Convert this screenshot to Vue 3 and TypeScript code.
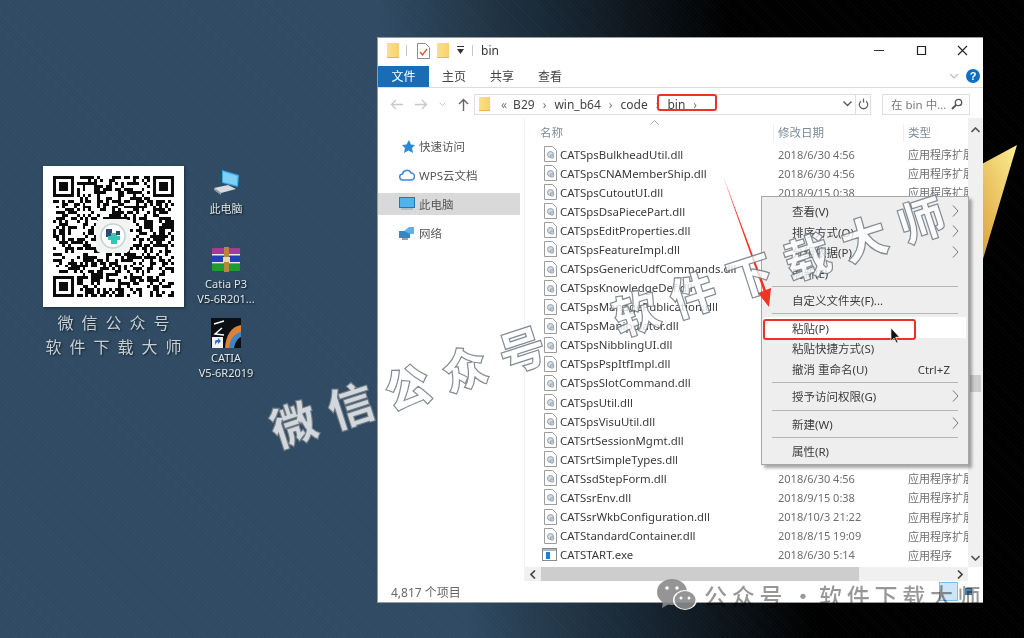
<script setup lang="ts">
interface FileRow {
  name: string
  date: string
  exe?: boolean
}

const names = [
  'CATSpsBulkheadUtil.dll', 'CATSpsCNAMemberShip.dll', 'CATSpsCutoutUI.dll', 'CATSpsDsaPiecePart.dll',
  'CATSpsEditProperties.dll', 'CATSpsFeatureImpl.dll', 'CATSpsGenericUdfCommands.dll', 'CATSpsKnowledgeDef.dll',
  'CATSpsManagePublication.dll', 'CATSpsManipulator.dll', 'CATSpsNibblingUI.dll', 'CATSpsPspItfImpl.dll',
  'CATSpsSlotCommand.dll', 'CATSpsUtil.dll', 'CATSpsVisuUtil.dll', 'CATSrtSessionMgmt.dll',
  'CATSrtSimpleTypes.dll', 'CATSsdStepForm.dll', 'CATSsrEnv.dll', 'CATSsrWkbConfiguration.dll',
  'CATStandardContainer.dll', 'CATSTART.exe',
]
const dates: Record<number, string> = {
  2: '2018/9/15 0:38', 18: '2018/9/15 0:38', 19: '2018/10/3 21:22', 20: '2018/8/15 19:09', 21: '2018/6/30 5:14',
}
const rows: FileRow[] = names.map((name, i) => ({
  name,
  date: dates[i] ?? '2018/6/30 4:56',
  exe: name.endsWith('.exe'),
}))

const menu = [
  { label: '查看(V)', arrow: true },
  { label: '排序方式(O)', arrow: true },
  { label: '分组依据(P)', arrow: true },
  { label: '刷新(E)' },
  { sep: true },
  { label: '自定义文件夹(F)...' },
  { sep: true },
  { label: '粘贴(P)', hot: true },
  { label: '粘贴快捷方式(S)' },
  { label: '撤消 重命名(U)', key: 'Ctrl+Z' },
  { sep: true },
  { label: '授予访问权限(G)', arrow: true },
  { sep: true },
  { label: '新建(W)', arrow: true },
  { sep: true },
  { label: '属性(R)' },
]

// fake qr matrix, seeded so that the picture stays the same
const size = 41
function finder(x: number, y: number) {
  return `M${x} ${y}h7v7h-7zM${x + 1} ${y + 1}v5h5v-5zM${x + 2} ${y + 2}h3v3h-3z`
}
function qrPath() {
  let seed = 20190
  let d = ''
  for (let y = 0; y < size; y++) {
    for (let x = 0; x < size; x++) {
      seed = (seed * 1103515245 + 12345) & 0x7fffffff
      const corner = (x < 8 && y < 8) || (x > 32 && y < 8) || (x < 8 && y > 32)
      if (!corner && (seed >> 16) % 100 < 50) d += `M${x} ${y}h1v1h-1z`
    }
  }
  return d + finder(0, 0) + finder(34, 0) + finder(0, 34)
}
const qr = qrPath()
</script>

<template>
  <div class="desktop">
    <svg class="shard" width="40" height="130" viewBox="0 0 40 130">
      <defs>
        <linearGradient id="gold" x1="0.8" y1="0" x2="0.1" y2="1">
          <stop offset="0" stop-color="#f8e98a" />
          <stop offset="1" stop-color="#dd9c38" />
        </linearGradient>
      </defs>
      <polygon points="37,0 0,20 0,124" fill="url(#gold)" />
    </svg>

    <div class="qr-card">
      <svg class="qr" viewBox="0 0 41 41" shape-rendering="crispEdges">
        <path :d="qr" fill="#0b0b0b" fill-rule="evenodd" />
      </svg>
      <svg class="qr-logo" viewBox="0 0 34 34">
        <rect width="34" height="34" rx="5" fill="#f2f4f4" />
        <circle cx="17" cy="17" r="12" fill="#fff" stroke="#c4d2d4" stroke-width="1.6" />
        <rect x="10" y="10" width="6" height="8" fill="#2c4a72" />
        <rect x="15" y="14" width="6" height="11" fill="#36c4b4" />
        <rect x="12" y="17" width="12" height="4" fill="#36c4b4" />
        <rect x="20" y="12" width="4" height="4" fill="#2c4a72" />
      </svg>
    </div>
    <div class="qr-caption">
      <div>微信公众号</div>
      <div>软件下载大师</div>
    </div>

    <div class="icons">
      <div class="shortcut pc">
        <svg width="32" height="28" viewBox="0 0 32 28">
          <polygon points="12,2 29,7 28,19 12,15" fill="#35a8ea" />
          <polygon points="13,3.5 27.5,8 27,17.5 13,14" fill="#7fd0f6" />
          <polygon points="4,20 18,17 26,21 11,25" fill="#d6dcdf" />
          <polygon points="4,20 11,25 11,27 4,22" fill="#98a3aa" />
        </svg>
        <span>此电脑</span>
      </div>
      <div class="shortcut rar">
        <svg width="30" height="26" viewBox="0 0 30 26">
          <rect x="1" y="1" width="28" height="7" rx="1" fill="#a63c92" />
          <rect x="1" y="9" width="28" height="7" rx="1" fill="#2440b8" />
          <rect x="1" y="17" width="28" height="7" rx="1" fill="#1f9b2f" />
          <rect x="1" y="7" width="28" height="1.5" fill="#e8e8e8" />
          <rect x="1" y="15" width="28" height="1.5" fill="#e8e8e8" />
          <rect x="13" y="0" width="5" height="25" fill="#b8853a" />
          <rect x="12" y="10" width="7" height="5" fill="#e8d9a8" />
        </svg>
        <span>Catia P3<br />V5-6R201...</span>
      </div>
      <div class="shortcut catia">
        <svg width="30" height="30" viewBox="0 0 30 30">
          <rect width="30" height="30" fill="#0c0f14" />
          <path d="M14 30C15 17 20 9 30 7v8c-6 2-8 8-9 15z" fill="#d9823a" />
          <path d="M18 30c1-9 5-14 12-16v5c-4 2-6 6-7 11z" fill="#3a86c8" />
          <path d="M3 6l10-3M11 10L4 16l9 1M4 21l8 1" stroke="#fff" stroke-width="1.4" fill="none" />
          <rect x="1" y="19" width="11" height="11" fill="#f2f2f2" />
          <path d="M4 27v-3c0-2 1-2 3-2v-2l3 3-3 3v-2c-1 0-2 1-3 3z" fill="#2a72c8" />
        </svg>
        <span>CATIA<br />V5-6R2019</span>
      </div>
    </div>

    <section class="window">
      <header class="titlebar">
        <i class="folder"></i>
        <b class="vline"></b>
        <svg class="note" width="13" height="16" viewBox="0 0 13 16">
          <path d="M.5.5h8l4 4v11H.5z" fill="#fff" stroke="#8d8d8d" />
          <path d="M3 9l2.500 3L10 6" fill="none" stroke="#d0562a" stroke-width="1.300" />
        </svg>
        <i class="folder"></i>
        <svg width="8" height="9" viewBox="0 0 8 9"><path d="M0 0h7v1H0zM0 3h7L3.500 8z" fill="#333" /></svg>
        <b class="vline"></b>
        <span class="title">bin</span>
        <div class="controls">
          <svg width="11" height="11" viewBox="0 0 11 11"><path d="M0 5.500h10" stroke="#333" /></svg>
          <svg width="11" height="11" viewBox="0 0 11 11"><path d="M1.500 1.500h8v8h-8z" fill="none" stroke="#222" stroke-width="1.200" /></svg>
          <svg width="11" height="11" viewBox="0 0 11 11"><path d="M1 1l9 9M10 1l-9 9" stroke="#222" stroke-width="1.100" /></svg>
        </div>
      </header>

      <nav class="tabs">
        <span class="tab file">文件</span>
        <span class="tab home">主页</span>
        <span class="tab share">共享</span>
        <span class="tab view">查看</span>
        <svg class="collapse" width="10" height="6" viewBox="0 0 10 6"><path d="M1 1l4 4 4-4" fill="none" stroke="#bbb" stroke-width="1.100" /></svg>
        <span class="help">?</span>
      </nav>

      <div class="addressbar">
        <div class="nav">
          <svg width="13" height="11" viewBox="0 0 13 11"><path d="M13 5.500H2M6 1L1.500 5.500 6 10" fill="none" stroke="#c8c8c8" stroke-width="1.300" /></svg>
          <svg width="13" height="11" viewBox="0 0 13 11"><path d="M0 5.500h11M7 1l4.500 4.500L7 10" fill="none" stroke="#c8c8c8" stroke-width="1.300" /></svg>
          <svg width="7" height="5" viewBox="0 0 7 5"><path d="M.5.500l3 3 3-3" fill="none" stroke="#c8c8c8" /></svg>
          <svg width="11" height="13" viewBox="0 0 11 13"><path d="M5.500 13V2M1 6l4.500-4.500L10 6" fill="none" stroke="#666" stroke-width="1.400" /></svg>
        </div>
        <div class="address">
          <i class="folder small"></i>
          <span class="crumb sep first">«</span>
          <span class="crumb b29">B29</span>
          <span class="crumb sep">›</span>
          <span class="crumb">win_b64</span>
          <span class="crumb sep">›</span>
          <span class="crumb">code</span>
          <span class="crumb sep">›</span>
          <span class="crumb">bin</span>
          <span class="crumb sep">›</span>
          <svg class="drop" width="9" height="6" viewBox="0 0 9 6"><path d="M.5.500l4 4 4-4" fill="none" stroke="#555" stroke-width="1.300" /></svg>
        </div>
        <div class="refresh">
          <svg width="11" height="12" viewBox="0 0 11 12"><path d="M3 3.200a4.200 4.200 0 1 0 5 0M5.500 .5v4" fill="none" stroke="#666" stroke-width="1.300" /></svg>
        </div>
        <div class="search">
          <span>在 bin 中...</span>
          <svg width="12" height="12" viewBox="0 0 12 12"><circle cx="7.500" cy="4.500" r="3.200" fill="none" stroke="#555" stroke-width="1.300" /><path d="M5 7l-4 4" stroke="#555" stroke-width="1.800" /></svg>
        </div>
      </div>

      <div class="main">
        <aside class="sidebar">
          <div class="side-item">
            <svg class="side-icon" width="13" height="13" viewBox="0 0 13 13"><polygon points="7,0 9,4.500 13,5 10,8 11,13 6.500,10.500 2,13 3,8 0,5 4.500,4.500" fill="#2b8ad8" /></svg>
            <span>快速访问</span>
          </div>
          <div class="side-item">
            <svg class="side-icon wide" width="16" height="12" viewBox="0 0 16 12"><path d="M4 11a3 3 0 0 1-.5-6A4.500 4.500 0 0 1 12 4a3.500 3.500 0 0 1 0 7z" fill="#fff" stroke="#3f86d6" stroke-width="1.500" /></svg>
            <span>WPS云文档</span>
          </div>
          <div class="side-item active">
            <svg class="side-icon wide" width="16" height="14" viewBox="0 0 16 14"><rect x=".5" y=".5" width="15" height="10" fill="#4fb4ee" stroke="#2277b8" /><rect x="2" y="11" width="12" height="2" fill="#b5bcc2" /></svg>
            <span>此电脑</span>
          </div>
          <div class="side-item">
            <svg class="side-icon wide" width="16" height="14" viewBox="0 0 16 14"><rect x="0" y="5" width="11" height="7" fill="#2f86c8" /><path d="M5 5l5-4h5v7h-4z" fill="#5cb2e4" /><rect x="3" y="12" width="6" height="2" fill="#9aa4ac" /></svg>
            <span>网络</span>
          </div>
        </aside>

        <div class="list">
          <div class="list-view">
            <div class="columns">
              <svg class="sort" width="9" height="5" viewBox="0 0 9 5"><path d="M.5 4.500l4-4 4 4" fill="none" stroke="#aaa" /></svg>
              <span class="col name">名称</span>
              <span class="col date">修改日期</span>
              <span class="col type">类型</span>
            </div>
            <div class="rows">
              <div v-for="row in rows" :key="row.name" class="row">
                <span class="cell name">
                  <svg v-if="!row.exe" width="13" height="16" viewBox="0 0 13 16">
                    <path d="M.5.500h8l4 4v11H.5z" fill="#fff" stroke="#9c9c9c" />
                    <circle cx="6.500" cy="8.500" r="3" fill="#d3dde4" stroke="#8ea0ac" />
                    <circle cx="8" cy="10.500" r="1.800" fill="#c6ced4" stroke="#8a949c" stroke-width=".7" />
                  </svg>
                  <svg v-else class="exe" width="15" height="13" viewBox="0 0 15 13">
                    <rect x=".5" y=".5" width="14" height="12" fill="#fff" stroke="#8a8a8a" />
                    <rect x="1" y="1" width="13" height="2" fill="#a8b8c4" />
                    <rect x="4" y="4" width="4" height="7" fill="#1f7fd8" />
                  </svg>
                  {{ row.name }}
                </span>
                <span class="cell date">{{ row.date }}</span>
                <span class="cell type">{{ row.exe ? '应用程序' : '应用程序扩展' }}</span>
              </div>
            </div>
          </div>
          <div class="vscroll">
            <svg width="9" height="6" viewBox="0 0 9 6"><path d="M.5 5l4-4 4 4" fill="none" stroke="#555" stroke-width="1.600" /></svg>
            <i class="thumb"></i>
            <svg width="9" height="6" viewBox="0 0 9 6"><path d="M.5 1l4 4 4-4" fill="none" stroke="#555" stroke-width="1.600" /></svg>
          </div>
          <div class="hscroll">
            <svg width="6" height="9" viewBox="0 0 6 9"><path d="M5 .5l-4 4 4 4" fill="none" stroke="#444" stroke-width="1.600" /></svg>
            <i class="thumb"></i>
            <svg width="6" height="9" viewBox="0 0 6 9"><path d="M1 .5l4 4-4 4" fill="none" stroke="#444" stroke-width="1.600" /></svg>
          </div>
        </div>
      </div>

      <footer class="status">
        <span>4,817 个项目</span>
        <div class="toggles">
          <i class="toggle on"></i>
          <i class="toggle"></i>
        </div>
      </footer>
    </section>

    <div class="context">
      <template v-for="(item, i) in menu" :key="i">
        <div v-if="item.sep" class="menu-sep"></div>
        <div v-else class="menu-item" :class="{ hot: item.hot }">
          <span>{{ item.label }}</span>
          <span v-if="item.key" class="menu-key">{{ item.key }}</span>
          <svg v-if="item.arrow" class="menu-arrow" width="7" height="12" viewBox="0 0 7 12"><path d="M1 .5l5 5.500-5 5.500" fill="none" stroke="#777" /></svg>
        </div>
      </template>
    </div>

    <div class="mark mark-address"></div>
    <div class="mark mark-paste"></div>

    <svg class="overlay" width="1024" height="638" viewBox="0 0 1024 638">
      <polygon points="723,176 763.500,291 758,293 769,307 771,288 766,290" fill="#ee3524" />
      <path d="M891 328v13l3-3 2.500 5 1.500-.8-2.500-5h4z" fill="#111" stroke="#fff" stroke-width=".6" />
    </svg>

    <div class="watermark">微信公众号　软件下载大师</div>

    <div class="brand">
      <svg width="40" height="32" viewBox="0 0 40 32">
        <ellipse cx="15" cy="13" rx="15" ry="13" fill="#8a8a8a" />
        <path d="M6 22l-1 7 7-4z" fill="#8a8a8a" />
        <ellipse cx="28" cy="21" rx="12" ry="10" fill="#fff" />
        <ellipse cx="28" cy="21" rx="10.500" ry="9" fill="#8a8a8a" />
        <circle cx="10" cy="9" r="1.800" fill="#fff" />
        <circle cx="20" cy="9" r="1.800" fill="#fff" />
        <circle cx="24" cy="19" r="1.500" fill="#fff" />
        <circle cx="32" cy="19" r="1.500" fill="#fff" />
      </svg>
      <span class="brand-text">公众号<em>·</em>软件下载大师</span>
    </div>
  </div>
</template>

<style>
html,
body {
  margin: 0;
  background: #000;
}
</style>

<style scoped>
.desktop {
  position: relative;
  width: 1024px;
  height: 638px;
  overflow: hidden;
  font-family: "Noto Sans", "Noto Sans CJK SC", sans-serif;
  background:
    repeating-linear-gradient(45deg, rgba(255, 255, 255, 0.018) 0 1px, transparent 1px 3px),
    linear-gradient(82deg, #2f4a62 0, #2f4a62 42%, #14212c 60%, #000 73%);
  filter: blur(0.45px);
}

.shard {
  position: absolute;
  left: 980px;
  top: 145px;
}

.qr-card {
  position: absolute;
  left: 43px;
  top: 166px;
  width: 141px;
  height: 141px;
  background: #fff;
  display: flex;
  align-items: center;
  justify-content: center;
  box-shadow: 1px 1px 3px rgba(0, 0, 0, 0.4);
}

.qr {
  width: 121px;
  height: 121px;
}

.qr-logo {
  position: absolute;
  left: 53px;
  top: 53px;
  width: 34px;
  height: 34px;
}

.qr-caption {
  position: absolute;
  left: 33px;
  top: 311px;
  width: 161px;
  text-align: center;
  white-space: nowrap;
  font-size: 16px;
  line-height: 24px;
  letter-spacing: 8px;
  text-indent: 8px;
  color: #c6d0d6;
  text-shadow: 1px 1px 2px rgba(0, 0, 0, 0.6);
}

.icons {
  position: absolute;
  left: 190px;
  top: 168px;
  width: 72px;
  display: flex;
  flex-direction: column;
  align-items: center;
  font-size: 11px;
  line-height: 15px;
  color: #dfe5e9;
  text-align: center;
  text-shadow: 1px 1px 2px rgba(0, 0, 0, 0.8);
}

.shortcut {
  display: flex;
  flex-direction: column;
  align-items: center;
  white-space: nowrap;
}

.shortcut svg {
  margin-bottom: 3px;
}

.pc svg {
  margin-bottom: 5px;
}

.catia svg {
  margin-bottom: 2px;
}

.pc {
  height: 79px;
}

.rar {
  height: 71px;
}

.window {
  position: absolute;
  left: 377px;
  top: 37px;
  width: 606px;
  height: 566px;
  box-sizing: border-box;
  border: 1px solid #9a9a9a;
  border-right: 0;
  background: #fff;
  display: flex;
  flex-direction: column;
  font-size: 11.5px;
  color: #444;
}

.titlebar {
  height: 26px;
  display: flex;
  align-items: center;
  padding-left: 9px;
  padding-bottom: 1px;
  box-sizing: border-box;
  gap: 7px;
}

.folder {
  display: block;
  width: 12px;
  height: 15px;
  background: linear-gradient(90deg, #fbe08c, #f7d26a);
  border-bottom: 1px solid #e3b94e;
  box-sizing: border-box;
}

.folder.small {
  margin-left: 4px;
  width: 11px;
  height: 14px;
}

.vline {
  width: 1px;
  height: 11px;
  background: #c8c8c8;
}

.note {
  margin-left: 3px;
}

.titlebar .folder + svg {
  margin-left: 1px;
}

.title {
  font-size: 12px;
  color: #333;
  margin-left: 1px;
}

.controls {
  margin-left: auto;
  width: 94px;
  display: flex;
  justify-content: space-between;
  padding-right: 15px;
}

.tabs {
  position: relative;
  height: 23px;
  display: flex;
  align-items: center;
  border-bottom: 1px solid #dcdcdc;
}

.tab {
  font-size: 12px;
  color: #444;
}

.file {
  width: 51px;
  height: 21px;
  margin-top: 1px;
  background: #1a6db5;
  color: #fff;
  text-align: center;
  line-height: 21px;
}

.home {
  margin-left: 13px;
}

.share {
  margin-left: 24px;
}

.view {
  margin-left: 24px;
}

.collapse {
  margin-left: auto;
}

.help {
  width: 14px;
  height: 14px;
  margin: 0 3px 0 7px;
  border-radius: 50%;
  background: #0d6fc4;
  color: #fff;
  font: bold 11px/14px "Liberation Sans", sans-serif;
  text-align: center;
}

.addressbar {
  height: 30px;
  display: flex;
  align-items: center;
  padding-top: 2px;
  box-sizing: border-box;
}

.nav {
  width: 96px;
  box-sizing: border-box;
  padding: 0 5px 0 12px;
  display: flex;
  align-items: center;
  justify-content: space-between;
}

.address {
  width: 382px;
  height: 21px;
  box-sizing: border-box;
  border: 1px solid #dedede;
  display: flex;
  align-items: center;
  font-size: 12px;
  color: #444;
  gap: 8px;
}

.crumb.sep {
  color: #777;
}

.crumb.first {
  margin-left: 3px;
}

.b29 {
  margin-left: -2px;
}

.drop {
  margin-left: auto;
  margin-right: 3px;
}

.refresh {
  width: 15px;
  height: 21px;
  box-sizing: border-box;
  border: 1px solid #dedede;
  border-left: 0;
  display: flex;
  align-items: center;
  justify-content: center;
}

.search {
  width: 88px;
  height: 21px;
  margin-left: 11px;
  box-sizing: border-box;
  border: 1px solid #dedede;
  padding: 0 6px 0 8px;
  display: flex;
  align-items: center;
  justify-content: space-between;
  color: #7a7a7a;
  font-size: 11.5px;
}

.main {
  flex: 1;
  display: flex;
  min-height: 0;
}

.sidebar {
  width: 147px;
  flex: none;
  padding: 17px 4px 0 0;
  box-sizing: border-box;
  display: flex;
  flex-direction: column;
  gap: 7px;
  border-right: 1px solid #f2f2f2;
}

.side-item {
  height: 22px;
  display: flex;
  align-items: center;
  padding-left: 24px;
  gap: 4px;
  color: #555;
}

.side-icon.wide {
  margin-left: -3px;
}

.active {
  background: #d9d9d9;
}

.list {
  position: relative;
  flex: 1;
  min-width: 0;
  display: grid;
  grid-template-columns: 1fr 15px;
  grid-template-rows: 1fr 14px;
}

.list-view {
  min-width: 0;
  overflow: hidden;
  position: relative;
}

.columns {
  position: relative;
  height: 26.5px;
  box-sizing: border-box;
  padding-bottom: 2.5px;
  display: flex;
  align-items: flex-end;
  color: #7a8b9a;
}

.col {
  height: 18px;
  line-height: 18px;
  padding-left: 5px;
  box-sizing: border-box;
  flex: none;
}

.sort {
  position: absolute;
  left: 125px;
  top: 2px;
}

.name {
  width: 248px;
  padding-left: 15px;
}

.date {
  width: 130px;
  border-left: 1px solid #eee;
  padding-left: 4px;
}

.type {
  width: 65px;
  border-left: 1px solid #eee;
  padding-left: 4px;
}

.rows {
  display: flex;
  flex-direction: column;
}

.row {
  height: 19.08px;
  flex: none;
  display: flex;
  align-items: center;
  white-space: nowrap;
}

.cell {
  flex: none;
  overflow: hidden;
  box-sizing: border-box;
  border-left: 0;
  color: #6e6e6e;
  font-size: 11px;
}

.cell.name {
  display: flex;
  align-items: center;
  gap: 3px;
  padding-left: 19px;
  color: #3a3a3a;
  font-size: 11.4px;
}

.cell.date {
  padding-left: 5px;
}

.cell.type {
  padding-left: 5px;
}

.exe {
  margin-left: -2px;
}

.vscroll {
  background: #f0f0f0;
  display: flex;
  flex-direction: column;
  align-items: center;
  justify-content: space-between;
  padding: 9px 0 6px;
  position: relative;
}

.vscroll .thumb {
  position: absolute;
  left: 2px;
  right: 2px;
  top: 257px;
  height: 17px;
  background: #cdcdcd;
}

.hscroll {
  background: #f0f0f0;
  display: flex;
  align-items: center;
  justify-content: space-between;
  padding: 0 5px;
  position: relative;
}

.hscroll .thumb {
  position: absolute;
  left: 16px;
  width: 318px;
  top: 0;
  bottom: 0;
  background: #cdcdcd;
}

.status {
  height: 21px;
  display: flex;
  align-items: center;
  padding-left: 13px;
  color: #666;
  font-size: 12px;
}

.toggles {
  margin-left: auto;
  margin-right: 5px;
  display: flex;
  align-items: center;
  gap: 0;
}

.toggle {
  width: 19px;
  height: 19px;
  box-sizing: border-box;
}

.toggle.on {
  background: #cde6f7;
  border: 1px solid #7cbce6;
}

.toggle:last-child {
  width: 20px;
  background: linear-gradient(#4d7fa8, #4d7fa8) center / 7px 7px no-repeat;
}

.context {
  position: absolute;
  left: 761px;
  top: 196px;
  width: 208px;
  height: 269px;
  box-sizing: border-box;
  padding: 3.500px 2px 0;
  background: #eeeeee;
  border: 1px solid #a6a6a6;
  box-shadow: 3px 3px 3px rgba(0, 0, 0, 0.35);
  font-size: 11.5px;
  color: #3c3c3c;
}

.menu-item {
  height: 20.7px;
  display: flex;
  align-items: center;
  padding-left: 28px;
  position: relative;
}

.menu-item.hot {
  background: #fff;
}

.menu-key {
  margin-left: auto;
  margin-right: 16px;
}

.menu-arrow {
  position: absolute;
  right: 7px;
  top: 4px;
}

.menu-sep {
  height: 6.700px;
  margin: 0 8px;
  background: linear-gradient(#b5b5b5, #b5b5b5) center / 100% 1px no-repeat;
}

.mark {
  position: absolute;
  box-sizing: border-box;
  border: 2px solid #e8322a;
  border-radius: 3px;
}

.mark-address {
  left: 657px;
  top: 94px;
  width: 60px;
  height: 17px;
}

.mark-paste {
  left: 763px;
  top: 319px;
  width: 153px;
  height: 21px;
}

.overlay {
  position: absolute;
  left: 0;
  top: 0;
  pointer-events: none;
}

.watermark {
  position: absolute;
  left: 271px;
  top: 399px;
  height: 60px;
  white-space: nowrap;
  transform: rotate(-18deg);
  transform-origin: 0 50%;
  font-family: "Noto Sans CJK SC", sans-serif;
  font-size: 46px;
  line-height: 60px;
  font-weight: 900;
  letter-spacing: 14px;
  color: rgba(255, 255, 255, 0.78);
  -webkit-text-stroke: 1.200px rgba(110, 120, 128, 0.85);
  pointer-events: none;
}

.brand {
  position: absolute;
  left: 657px;
  top: 579px;
  display: flex;
  align-items: center;
  gap: 7px;
  height: 32px;
  opacity: 0.9;
}

.brand-text {
  font-family: "Noto Sans CJK SC", sans-serif;
  font-size: 23px;
  font-weight: 500;
  letter-spacing: 4.700px;
  color: rgba(0, 0, 0, 0.45);
  white-space: nowrap;
}

.brand-text em {
  font-style: normal;
  display: inline-block;
  width: 32px;
  text-align: center;
  letter-spacing: 0;
}
</style>
